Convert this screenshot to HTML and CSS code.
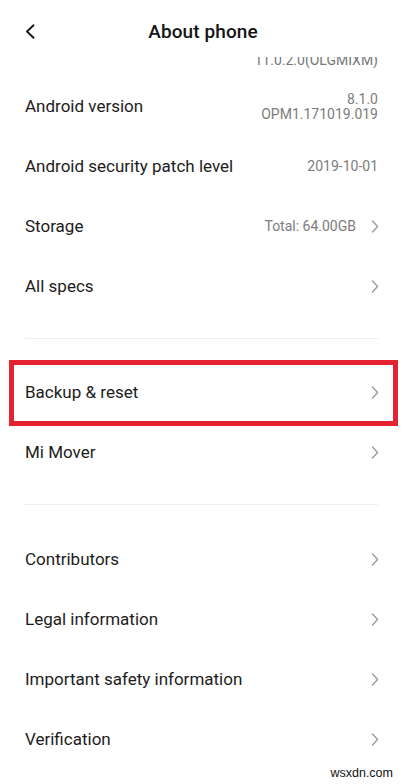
FILE: index.html
```html
<!DOCTYPE html>
<html lang="en">
<head>
<meta charset="utf-8">
<title>About phone</title>
<link rel="stylesheet" href="styles.css">
</head>
<body>
<div class="screen">
  <header class="header">
    <div class="back">
      <svg class="back-icon" viewBox="0 0 10 15" width="10" height="15"><path d="M8.5 1.2 L2 7.5 L8.5 13.8" fill="none" stroke="#1a1a1a" stroke-width="1.9" stroke-linecap="round" stroke-linejoin="round"/></svg>
    </div>
    <h1 class="title">About phone</h1>
    <div class="spacer"></div>
  </header>
  <main class="content">
    <div class="row-clip">
      <span class="value">11.0.2.0(OLGMIXM)</span>
    </div>
    <div class="row">
      <span class="label">Android version</span>
      <span class="value stack"><span>8.1.0</span><span>OPM1.171019.019</span></span>
    </div>
    <div class="row">
      <span class="label">Android security patch level</span>
      <span class="value">2019-10-01</span>
    </div>
    <div class="row">
      <span class="label">Storage</span>
      <span class="trail"><span class="value">Total: 64.00GB</span><svg class="chev" viewBox="0 0 8 13" width="8" height="13"><path d="M1.5 1 L6.6 6.5 L1.5 12" fill="none" stroke="#9c9c9c" stroke-width="1.4" stroke-linecap="round" stroke-linejoin="round"/></svg></span>
    </div>
    <div class="row">
      <span class="label">All specs</span>
      <svg class="chev" viewBox="0 0 8 13" width="8" height="13"><path d="M1.5 1 L6.6 6.5 L1.5 12" fill="none" stroke="#9c9c9c" stroke-width="1.4" stroke-linecap="round" stroke-linejoin="round"/></svg>
    </div>
    <div class="divider"></div>
    <div class="row highlighted">
      <span class="label">Backup &amp; reset</span>
      <svg class="chev" viewBox="0 0 8 13" width="8" height="13"><path d="M1.5 1 L6.6 6.5 L1.5 12" fill="none" stroke="#9c9c9c" stroke-width="1.4" stroke-linecap="round" stroke-linejoin="round"/></svg>
      <span class="highlight-box"></span>
    </div>
    <div class="row">
      <span class="label">Mi Mover</span>
      <svg class="chev" viewBox="0 0 8 13" width="8" height="13"><path d="M1.5 1 L6.6 6.5 L1.5 12" fill="none" stroke="#9c9c9c" stroke-width="1.4" stroke-linecap="round" stroke-linejoin="round"/></svg>
    </div>
    <div class="divider second"></div>
    <div class="row">
      <span class="label">Contributors</span>
      <svg class="chev" viewBox="0 0 8 13" width="8" height="13"><path d="M1.5 1 L6.6 6.5 L1.5 12" fill="none" stroke="#9c9c9c" stroke-width="1.4" stroke-linecap="round" stroke-linejoin="round"/></svg>
    </div>
    <div class="row">
      <span class="label">Legal information</span>
      <svg class="chev" viewBox="0 0 8 13" width="8" height="13"><path d="M1.5 1 L6.6 6.5 L1.5 12" fill="none" stroke="#9c9c9c" stroke-width="1.4" stroke-linecap="round" stroke-linejoin="round"/></svg>
    </div>
    <div class="row">
      <span class="label">Important safety information</span>
      <svg class="chev" viewBox="0 0 8 13" width="8" height="13"><path d="M1.5 1 L6.6 6.5 L1.5 12" fill="none" stroke="#9c9c9c" stroke-width="1.4" stroke-linecap="round" stroke-linejoin="round"/></svg>
    </div>
    <div class="row">
      <span class="label">Verification</span>
      <svg class="chev" viewBox="0 0 8 13" width="8" height="13"><path d="M1.5 1 L6.6 6.5 L1.5 12" fill="none" stroke="#9c9c9c" stroke-width="1.4" stroke-linecap="round" stroke-linejoin="round"/></svg>
    </div>
  </main>
  <span class="watermark">wsxdn.com</span>
</div>
</body>
</html>
```
FILE: styles.css
```css
* { box-sizing: border-box; }

html, body {
  margin: 0;
  padding: 0;
  background: #ffffff;
}

body {
  font-family: Roboto, "Noto Sans", "Liberation Sans", sans-serif;
  color: #1c1c1c;
}

.screen {
  position: relative;
  width: 405px;
  height: 784px;
  overflow: hidden;
  display: flex;
  flex-direction: column;
  background: #ffffff;
}

.header {
  height: 57px;
  flex: 0 0 57px;
  padding: 6px 25px 0 26px;
  display: grid;
  grid-template-columns: 1fr auto 1fr;
  align-items: center;
  background: #ffffff;
}

.back {
  display: flex;
  align-items: center;
}

.back-icon {
  display: block;
  margin-left: -1px;
}

.title {
  margin: 0;
  font-size: 19px;
  line-height: 24px;
  font-weight: 500;
  color: #141414;
  letter-spacing: 0.1px;
}

.content {
  flex: 1 1 auto;
  overflow: hidden;
  display: flex;
  flex-direction: column;
}

.row-clip {
  height: 19px;
  flex: 0 0 19px;
  overflow: hidden;
  display: flex;
  justify-content: flex-end;
  align-items: flex-end;
  padding: 0 27px 8px 25px;
}

.row-clip .value {
  line-height: 16px;
  color: #777777;
}

.row {
  position: relative;
  height: 60px;
  flex: 0 0 60px;
  display: flex;
  align-items: center;
  justify-content: space-between;
  padding: 0 27px 0 25px;
}

.label {
  font-size: 17px;
  line-height: 22px;
  color: #1c1c1c;
}

.value {
  font-size: 14px;
  line-height: 16px;
  color: #7c7c7c;
  text-align: right;
}

.value.stack {
  display: flex;
  flex-direction: column;
  align-items: flex-end;
  line-height: 15px;
  margin-top: 1px;
}

.trail {
  display: flex;
  align-items: center;
  gap: 15px;
}

.chev {
  display: block;
  flex: 0 0 auto;
  margin-right: -1px;
}

.divider {
  flex: 0 0 1px;
  height: 1px;
  margin: 22px 27px 23px 25px;
  background: #efefef;
}

.divider.second {
  margin-bottom: 24px;
}

.highlight-box {
  position: absolute;
  top: -2px;
  bottom: -4px;
  left: 9px;
  right: 7px;
  border: 5px solid #e52330;
  pointer-events: none;
}

.watermark {
  position: absolute;
  right: 12px;
  bottom: 4px;
  font-family: "Liberation Sans", Arial, sans-serif;
  font-size: 12.5px;
  line-height: 14px;
  color: #111111;
}
```
